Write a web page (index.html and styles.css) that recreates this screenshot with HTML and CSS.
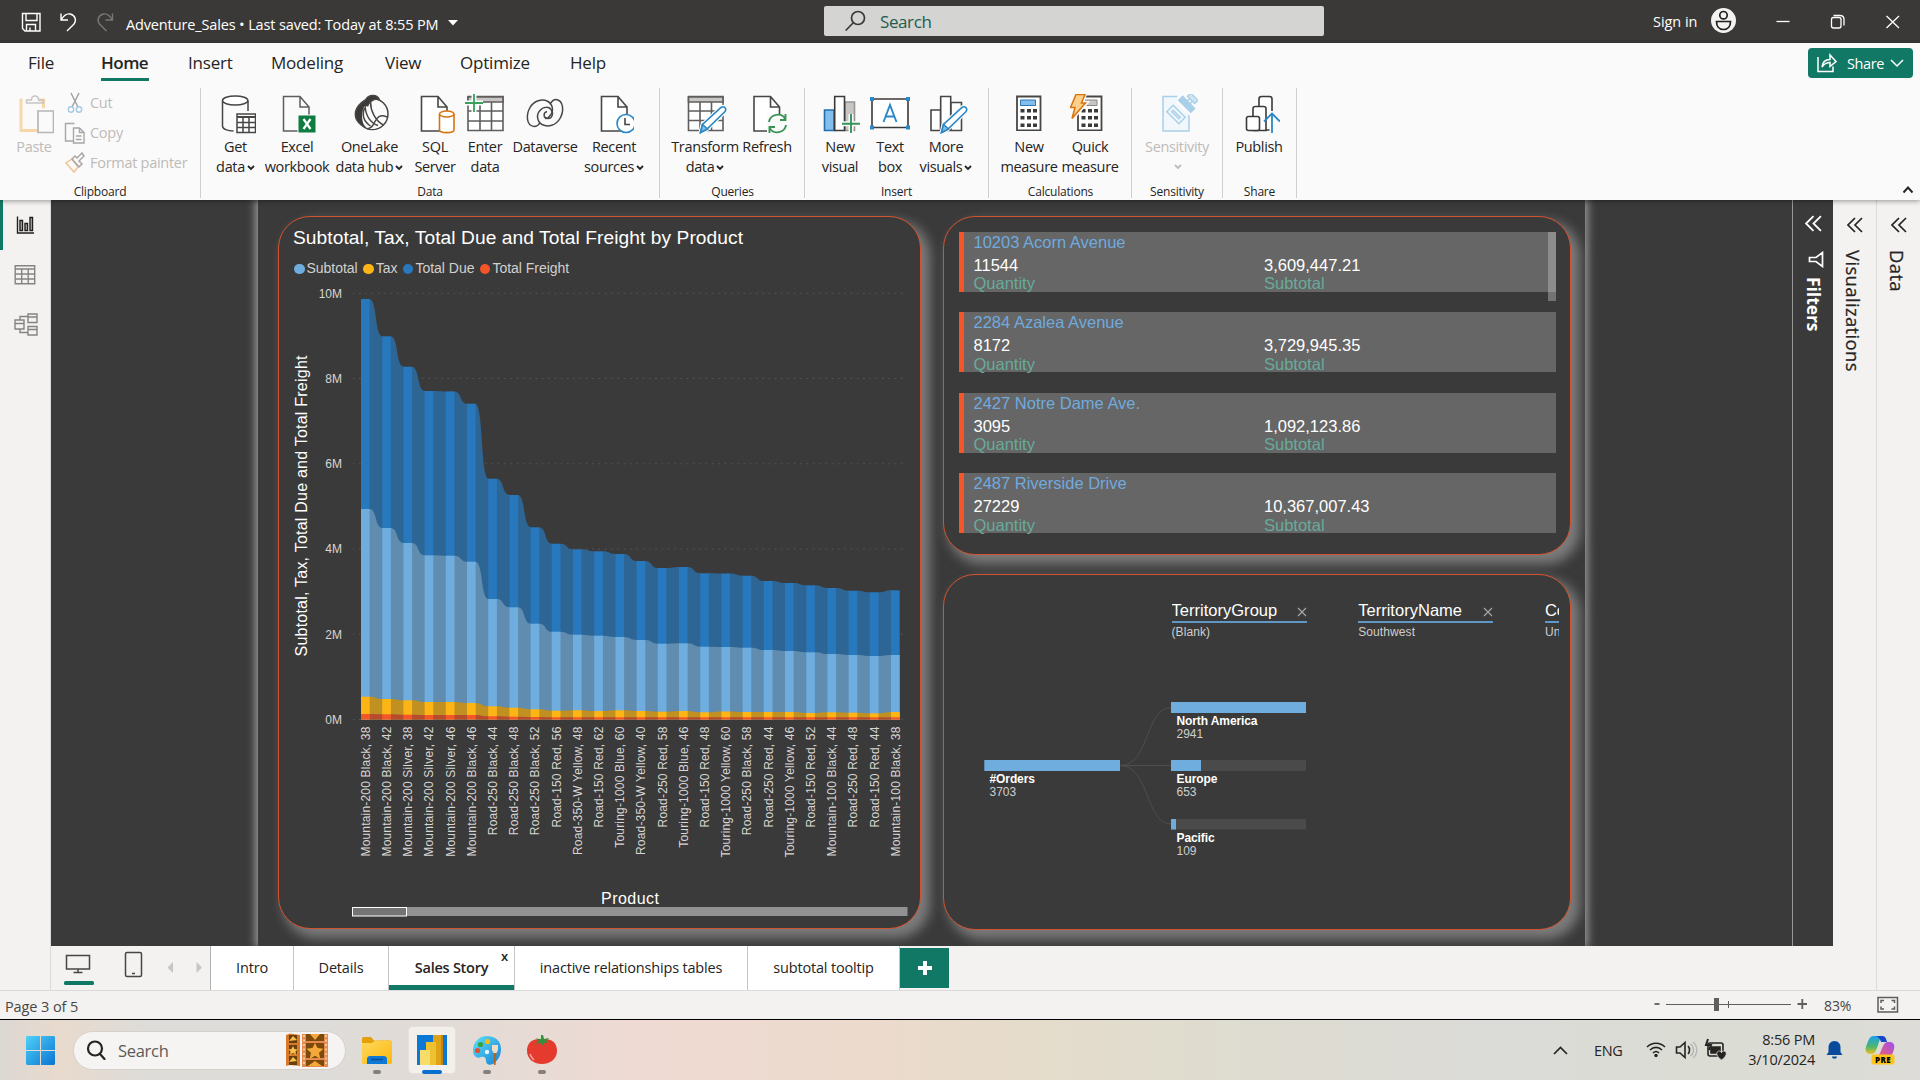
FILE: index.html
```html
<!DOCTYPE html>
<html lang="en">
<head>
<meta charset="utf-8">
<title>Adventure_Sales</title>
<link rel="stylesheet" href="styles.css">
</head>
<body>
<svg class="defs" width="0" height="0">
  <defs>
    <symbol id="chev" viewBox="0 0 8 6"><path d="M1 1l3 3 3-3" fill="none" stroke="currentColor" stroke-width="1.8"/></symbol>
    <symbol id="dbl" viewBox="0 0 16 16"><path d="M8 1L1 8l7 7M15 1L8 8l7 7" fill="none" stroke="currentColor" stroke-width="1.7"/></symbol>
    <symbol id="calc" viewBox="0 0 26 37"><path d="M1 2.5h23.5v34H1z" fill="#fff" stroke="#484644" stroke-width="1.8"/><g fill="#3b3a39"><path d="M4.5 15h4v3.5h-4zM11 15h4v3.5h-4zM17 15h4v3.5h-4zM4.5 22h4v3.5h-4zM11 22h4v3.5h-4zM17 22h4v3.5h-4zM4.5 29.500h4v3.500h-4zM11 29.500h4v3.500h-4zM17 29.500h4v3.500h-4z"/></g></symbol>
  </defs>
</svg>
<div class="app">
  <header class="titlebar">
    <svg class="quick" width="100" height="24" viewBox="20 10 100 24" fill="none" stroke="#fff" stroke-width="1.4">
      <path d="M22.500 13.500h17.500v17.500h-15l-2.500-2.500zM26 13.500v7h11v-7M26.500 31v-6.500h9V31M30 31v-3.500"/>
      <path d="M61 13.500v6.500h7M61 20c3-5 6-6.500 9-6 5 1 7 6 4 10l-7 7"/>
      <path stroke="#797775" d="M112.500 13.500v6.500h-7M112.500 20c-3-5-6-6.500-9-6-5 1-7 6-4 10l7 7"/>
    </svg>
    <span class="file-name">Adventure_Sales <b>•</b> Last saved: Today at 8:55 PM</span>
    <svg class="file-caret" width="10" height="6"><path d="M0 0h10L5 5.500z" fill="#fff"/></svg>
    <div class="search">
      <svg width="22" height="22" viewBox="0 0 22 22" fill="none" stroke="#3b3a39" stroke-width="1.700"><circle cx="13" cy="8" r="6.500"/><path d="M8.500 12.500L.7 20.500"/></svg>
      <span>Search</span>
    </div>
    <span class="signin">Sign in</span>
    <svg class="win" width="190" height="30" viewBox="1710 8 190 30" fill="none" stroke="#fff" stroke-width="1.300">
      <circle cx="1723.500" cy="21.500" r="12.500" fill="#f3f2f1" stroke="none"/>
      <g stroke="#201f1e" stroke-width="1.700"><circle cx="1723.500" cy="16.200" r="3.700"/><path d="M1716.500 22.500h14c0 4-2 8-7 8s-7-4-7-8z"/></g>
      <path d="M1776.500 22.500h13"/>
      <rect x="1831.500" y="18.500" width="9.500" height="10.500" rx="2"/><path d="M1833.500 16.500h6.500c2.500 0 4 1.500 4 4v6"/>
      <path d="M1886.500 17l12.500 12M1899 17l-12.500 12"/>
    </svg>
  </header>

  <section class="ribbon">
    <nav class="menu">
      <a class="m-file">File</a><a class="m-home on">Home</a><a class="m-insert">Insert</a><a class="m-model">Modeling</a><a class="m-view">View</a><a class="m-opt">Optimize</a><a class="m-help">Help</a>
      <div class="share">
        <svg width="20" height="20" viewBox="0 0 20 20" fill="none" stroke="#fff" stroke-width="1.500"><path d="M1 4v14.500h15V13.500"/><path d="M5 14c.5-5 3-7.500 8-7.500V2l6 6.500-6 5v-4c-4 0-6 1.500-8 4.500z"/></svg>
        <span>Share</span>
        <svg width="14" height="9" viewBox="0 0 14 9"><path d="M1 1l6 6 6-6" fill="none" stroke="#fff" stroke-width="1.500"/></svg>
      </div>
    </nav>
    <div class="groups">
      <div class="group g-clip">
        <div class="tools off">
          <div class="tool t-paste"><svg width="40" height="40" viewBox="-1.500 0 40 40" fill="none"><path d="M7 6h-1.500v30.500H22M28 14V6h-5" stroke="#f6d7ab" stroke-width="3"/><path d="M11 9V6h5c0-3 2-4 3.500-4s3.500 1 3.500 4h5v3z" stroke="#c8c6c4" stroke-width="1.500"/><path d="M22.500 17H38v21.500H22.500z" fill="#fafafa" stroke="#b8b6b4" stroke-width="1.700"/></svg><span>Paste</span></div>
          <div class="minis">
            <div><svg width="22" height="22" viewBox="0 0 22 22" fill="none" stroke-width="1.400"><path d="M7 1l7 14M15 1L8 15" stroke="#a19f9d"/><circle cx="7" cy="17.500" r="2.700" stroke="#a3cbe4"/><circle cx="15" cy="17.500" r="2.700" stroke="#a3cbe4"/></svg>Cut</div>
            <div><svg width="22" height="22" viewBox="0 0 22 22" fill="#fafafa" stroke="#a9a7a5" stroke-width="1.400"><path d="M9 19H1.500V1.500h9"/><path d="M9.500 6h6l4.500 4.500V21H9.500zM15.500 6v4.500H20M12 14h5.500M12 17.500h5.500"/></svg>Copy</div>
            <div><svg width="22" height="22" viewBox="0 0 22 22" fill="none" stroke-width="1.500"><path d="M2 11l8 9 4-5-6-8z" stroke="#f3c493"/><path d="M8 7l7 8 3-3-3-3 5-5-2-3-5 5-2-2z" stroke="#a9a7a5"/></svg>Format painter</div>
          </div>
        </div>
        <div class="glabel">Clipboard</div>
      </div>
      <div class="group g-data">
        <div class="tools">
          <div class="tool" style="width:57px"><svg width="40" height="40" viewBox="0 0 40 40" fill="none" stroke="#484644" stroke-width="1.500"><path d="M6.500 7v25c0 3 5 5 11 5M32 7v10"/><ellipse cx="19.200" cy="6.500" rx="12.700" ry="4.500" fill="#fff"/><path d="M21 20h18.500v18.500H21z" fill="#fff"/><path d="M21 23h18" stroke-width="2"/><path d="M21 28.500h18M21 33.500h18M27 22v17M33 22v17"/></svg><span>Get<br>data<svg class="dd" width="8" height="6"><use href="#chev"/></svg></span></div>
          <div class="tool" style="width:66px"><svg width="40" height="40" viewBox="0 0 40 40" stroke="#605e5c" stroke-width="1.500"><path d="M6.500 2.500H23l9 10.500v24H6.500zM23 2.500V13h9" fill="#fafafa"/><path d="M21 21h18v18H21z" fill="#107c41" stroke="#fafafa" stroke-width="1"/><path d="M26.500 25l7 10M33.500 25l-7 10" stroke="#fff" stroke-width="2.200"/></svg><span>Excel<br>workbook</span></div>
          <div class="tool" style="width:79px"><svg width="40" height="40" viewBox="-.5 0 40 40" fill="none" stroke="#484644" stroke-width="1.500"><circle cx="22" cy="20" r="15.500"/><path d="M15 6c3-6 12-6 14 0-4-2-8 0-11 4-4 6-4 15 0 23C9 33 4 25 5 18c1-5 5-9 10-12z" fill="#3b3a39"/><path d="M14 12c5 0 6 3 8 8s5 10 9 11c-6 6-15 5-18-1-2-5-2-12 1-18z" fill="#fafafa" stroke="none"/><path d="M14.500 12c1 11 6 17 13 19.500M36.500 23c-7-3-10 0-13 6-1 3-3 5-7 6M20 8c0 9 5 19 13 23M14 14c-3 8 0 14 6 18"/></svg><span>OneLake<br>data hub<svg class="dd" width="8" height="6"><use href="#chev"/></svg></span></div>
          <div class="tool" style="width:52px"><svg width="40" height="40" viewBox="0 0 40 40" stroke="#484644" stroke-width="1.600"><path d="M6.500 2.500H23l9 10.500v24H6.500zM23 2.500V13h9" fill="#fff"/><g stroke="#d8730f"><path d="M24.500 20v16c0 3.500 14.500 3.500 14.500 0V20" fill="#fff"/><ellipse cx="31.750" cy="20" rx="7.250" ry="3" fill="#fff"/></g></svg><span>SQL<br>Server</span></div>
          <div class="tool" style="width:48px"><svg width="40" height="40" viewBox="0 0 40 40" fill="none" stroke="#605e5c" stroke-width="1.600"><path d="M3 2.500h35v34H3z" fill="#fff"/><path d="M3 3h35v5H3z" fill="#c8c6c4"/><path d="M3 17h35M3 27h35M15 8v29M26.500 8v29"/><path d="M9 0v18M0 9h18" stroke="#fafafa" stroke-width="5"/><path d="M9 0v18M0 9h18" stroke="#37a15b" stroke-width="1.800"/></svg><span>Enter<br>data</span></div>
          <div class="tool" style="width:72px"><svg width="40" height="40" viewBox="0 0 40 40" fill="none" stroke="#484644" stroke-width="1.500"><path d="M31 5.500c8 1 8 12 4 19-4 7-12 9-18 6-5-3-6-10-2-14 3-4 9-4 11-1 3 4 1 9-3 9-5 0-5-6-1-7"/><path d="M9 32.500c-8-1-8-12-4-19 4-7 12-9 18-6 5 3 6 10 2 14-1 2-3 3-5 3M31 5.500c-3 0-5 3-6 5M9 32.500c3 0 5-2 6-4"/></svg><span>Dataverse</span></div>
          <div class="tool" style="width:66px"><svg width="40" height="40" viewBox="0 0 40 40" stroke="#484644" stroke-width="1.600"><path d="M7.500 2.500H24l9 10.500v24H7.500zM24 2.500V13h9" fill="#fff"/><circle cx="32" cy="29.500" r="9" fill="#fff" stroke="#2b88c6"/><path d="M31 24v6.500h5" fill="none"/></svg><span>Recent<br>sources<svg class="dd" width="8" height="6"><use href="#chev"/></svg></span></div>
        </div>
        <div class="glabel">Data</div>
      </div>
      <div class="group g-quer">
        <div class="tools">
          <div class="tool" style="width:66px"><svg width="44" height="40" viewBox="-2 0 44 40" fill="none" stroke="#605e5c" stroke-width="1.600"><path d="M3.500 2.500H38v34H3.500z" fill="#fff"/><path d="M3.500 3H38v5H3.500z" fill="#c8c6c4"/><path d="M3.500 17H38M3.500 26.500H38M15 8v29M26.500 8v29"/><path d="M15.500 38.500l2-8L36 13.500c3-2 6 1 4 4L22 35z" fill="#fff" stroke="#fafafa" stroke-width="4"/><path d="M15.500 38.500l2-8L36 13.500c3-2 6 1 4 4L22 35z" fill="#fff" stroke="#2b88c6"/><path d="M15.500 38.500l2-8 5 4.500z" fill="#83beec" stroke="#2b88c6"/></svg><span>Transform<br>data<svg class="dd" width="8" height="6"><use href="#chev"/></svg></span></div>
          <div class="tool" style="width:58px"><svg width="40" height="40" viewBox="0 0 40 40" stroke="#484644" stroke-width="1.600" fill="none"><path d="M7 2.500h16.500l9 10.500v24H7zM23.500 2.500V13h9" fill="#fff"/><path d="M20 20h20v19H20z" fill="#fafafa" stroke="none"/><g stroke="#3a9455" stroke-width="1.900"><path d="M22 28c1-8 13-10 16-3M38.500 20v6H33M39 31c-1 8-13 10-16 3M22.500 39v-6H28"/></g></svg><span>Refresh</span></div>
        </div>
        <div class="glabel">Queries</div>
      </div>
      <div class="group g-ins">
        <div class="tools">
          <div class="tool" style="width:48px"><svg width="40" height="40" viewBox="0 0 40 40" fill="none" stroke-width="1.600"><path d="M25 8h9.500v28.500H25z" fill="#c8c6c4" stroke="#979593"/><path d="M4.500 16H14v20.500H4.500z" fill="#83beec" stroke="#1f6fb0"/><path d="M14.700 2.500H24.500v34h-9.800z" fill="#fff" stroke="#3b3a39"/><path d="M31 20v19M22 29.700h18" stroke="#fafafa" stroke-width="5"/><path d="M31 20v19M22 29.700h18" stroke="#37935a" stroke-width="1.900"/></svg><span>New<br>visual</span></div>
          <div class="tool" style="width:52px"><svg width="40" height="40" viewBox="0 0 40 40"><path d="M2 5h36v28.500H2z" fill="#fff" stroke="#3b3a39" stroke-width="1.600"/><path d="M0 3h4v4H0zM36 3h4v4h-4zM0 31.500h4v4H0zM36 31.500h4v4h-4z" fill="#2b88c6"/><path d="M13.500 28L20 11l6.500 17M15.500 22.500h9" fill="none" stroke="#2b88c6" stroke-width="1.900"/></svg><span>Text<br>box</span></div>
          <div class="tool" style="width:60px"><svg width="44" height="40" viewBox="-2 0 44 40" fill="#fff" stroke="#484644" stroke-width="1.600"><path d="M25 8.500h10.500v28H25zM5 16h9.500v20.500H5zM14.700 2.500h10v34h-10z"/><path d="M15.500 38.500l2-8L36 13.500c3-2 6 1 4 4L22 35z" stroke="#fafafa" stroke-width="4"/><path d="M15.500 38.500l2-8L36 13.500c3-2 6 1 4 4L22 35z" stroke="#2b88c6"/><path d="M15.500 38.500l2-8 5 4.500z" fill="#83beec" stroke="#2b88c6"/></svg><span>More<br>visuals<svg class="dd" width="8" height="6"><use href="#chev"/></svg></span></div>
        </div>
        <div class="glabel">Insert</div>
      </div>
      <div class="group g-calc">
        <div class="tools">
          <div class="tool" style="width:58px"><svg width="40" height="40" viewBox="0 0 40 40"><use href="#calc" x="7" y="0" width="26" height="37"/><path d="M11.500 6h15v5.500h-15z" fill="#83beec" stroke="#2b78b8"/></svg><span>New<br>measure</span></div>
          <div class="tool" style="width:64px"><svg width="40" height="40" viewBox="0 0 40 40"><use href="#calc" x="7" y="0" width="26" height="37"/><path d="M12 6h15v5.500H12z" fill="#c8c6c4" stroke="#8a8886"/><path d="M6 0h9l-3 9h4L2 25l3-11H.500z" fill="#fbd08a" stroke="#fafafa" stroke-width="4"/><path d="M6 .500h9l-3.500 8.500h4L2 24.500l3-11H.500z" fill="#fbd08a" stroke="#d8730f" stroke-width="1.500"/></svg><span>Quick<br>measure</span></div>
        </div>
        <div class="glabel">Calculations</div>
      </div>
      <div class="group g-sens">
        <div class="tools off">
          <div class="tool" style="width:70px"><svg width="42" height="40" viewBox="0 0 42 40" fill="#f1f7fb" stroke="#a9d0e8" stroke-width="1.500"><path d="M7 2.500h26v34.500H7z"/><path d="M22-1h20v20l-8 3L20 9z" fill="#fafafa" stroke="none"/><g transform="translate(20 20.500) rotate(45)"><path d="M-8.500-4.500h17v9h-17zM-5-1H5v2H-5z"/></g><g transform="translate(30.500 10.500) rotate(45)"><path d="M-8.500-3h17v5.500h-17z" fill="#a9d0e8"/><path d="M-2-6.500h4V-3h-4z"/><path d="M-5-11H5v4.500H-5z" fill="#d3e6f2"/></g></svg><span>Sensitivity<br><svg class="dd" width="8" height="6"><use href="#chev"/></svg></span></div>
        </div>
        <div class="glabel">Sensitivity</div>
      </div>
      <div class="group g-share">
        <div class="tools">
          <div class="tool" style="width:56px"><svg width="42" height="40" viewBox="-1 0 42 40" fill="#fff" stroke="#3b3a39" stroke-width="1.600"><path d="M20 12V5c0-1.500 1-2.500 2.500-2.500h8C32 2.500 33 3.500 33 5v31H20"/><path d="M14 22v-7.500c0-1.500 1-2 2.500-2h8c1.500 0 2.500.5 2.500 2V36.500H14"/><rect x="7.500" y="22.500" width="13" height="14" rx="2"/><path d="M33 17v22" stroke="#fafafa" stroke-width="5"/><path d="M33 39V20M25 27.500l8-8 8 8" fill="none" stroke="#2b88c6" stroke-width="1.800"/></svg><span>Publish</span></div>
        </div>
        <div class="glabel">Share</div>
      </div>
      <svg class="collapse" width="12" height="9" viewBox="0 0 12 9"><path d="M1.500 7.500L6 2.500l4.500 5" fill="none" stroke="#252423" stroke-width="1.900"/></svg>
    </div>
  </section>

  <div class="middle">
    <aside class="rail">
      <div class="rail-item on"><svg width="20" height="20" viewBox="0 0 20 20" fill="none" stroke="#201f1e" stroke-width="1.400"><path d="M1.500 1.500v16.500H18"/><path d="M4 5.500h2.500v10H4zM9 8.500h2.500v7H9zM14 2.500h2.500v13H14z" fill="#bbb"/></svg></div>
      <div class="rail-item"><svg width="22" height="20" viewBox="-1 1 22 20" fill="none" stroke="#868482" stroke-width="1.400"><path d="M.2 1.700h19.500v18H.2zM.2 5h19.500M.2 10h19.500M.2 15h19.500M6.700 5v14.700M13.200 5v14.700"/></svg></div>
      <div class="rail-item"><svg width="24" height="24" viewBox="0 0 24 24" fill="none" stroke="#868482" stroke-width="1.400"><path d="M14 1h9v8.500h-9zM14 4h9M1 7h9v9H1zM1 10.500h9M14 13.500h9V22h-9zM14 16.500h9M6 7V3.500h8M6 16v3.500h8"/></svg></div>
    </aside>
    <main class="canvas">
      <div class="report">
        <section class="card chart-card">
          <h2>Subtotal, Tax, Total Due and Total Freight by Product</h2>
          <div class="legend"><i class="c-sub"></i><span>Subtotal</span><i class="c-tax"></i><span>Tax</span><i class="c-due"></i><span>Total Due</span><i class="c-fre"></i><span>Total Freight</span></div>
          <svg id="chart" width="641" height="648" viewBox="279 280 641 648"></svg>
        </section>
        <div class="right-col">
          <section class="card rows-card">
            <div class="rows">
              <div class="row"><h3>10203 Acorn Avenue</h3><p><b>11544</b><b>3,609,447.21</b></p><p class="k"><span>Quantity</span><span>Subtotal</span></p></div>
              <div class="row"><h3>2284 Azalea Avenue</h3><p><b>8172</b><b>3,729,945.35</b></p><p class="k"><span>Quantity</span><span>Subtotal</span></p></div>
              <div class="row"><h3>2427 Notre Dame Ave.</h3><p><b>3095</b><b>1,092,123.86</b></p><p class="k"><span>Quantity</span><span>Subtotal</span></p></div>
              <div class="row"><h3>2487 Riverside Drive</h3><p><b>27229</b><b>10,367,007.43</b></p><p class="k"><span>Quantity</span><span>Subtotal</span></p></div>
              <div class="scroll"></div>
            </div>
          </section>
          <section class="card tree-card">
            <div class="levels">
              <div class="level"><h4>TerritoryGroup<svg width="10" height="10" viewBox="0 0 10 10"><path d="M1 1l8 8M9 1L1 9" stroke="#a8a6a4" stroke-width="1.200"/></svg></h4><p>(Blank)</p></div>
              <div class="level"><h4>TerritoryName<svg width="10" height="10" viewBox="0 0 10 10"><path d="M1 1l8 8M9 1L1 9" stroke="#a8a6a4" stroke-width="1.200"/></svg></h4><p>Southwest</p></div>
              <div class="level"><h4>Country</h4><p>United States</p></div>
            </div>
            <svg class="tree" width="340" height="180" viewBox="980 690 340 180">
              <g fill="none" stroke="#4e4e4e"><path d="M1120 765.500C1150 765.500 1145 707.500 1171 707.500M1120 765.500H1171M1120 765.500C1150 765.500 1145 824 1171 824"/></g>
              <g fill="#4a4a4a"><path d="M1171 760h135v11h-135zM1171 819h135v10.500h-135z"/></g>
              <g fill="#70addf"><path d="M984.300 760H1120v11H984.300zM1171 702h135v11h-135zM1171 760h30v11h-30zM1171 819h5v10.500h-5z"/></g>
              <g class="n"><text x="989.500" y="783">#Orders</text><text x="1176.500" y="725">North America</text><text x="1176.500" y="783">Europe</text><text x="1176.500" y="842">Pacific</text></g>
              <g class="v"><text x="989.500" y="796">3703</text><text x="1176.500" y="738">2941</text><text x="1176.500" y="796">653</text><text x="1176.500" y="855">109</text></g>
            </svg>
          </section>
        </div>
      </div>
    </main>
    <aside class="filters"><svg width="17" height="17"><use href="#dbl"/></svg><svg class="funnel" width="16" height="17" viewBox="0 0 16 17"><path d="M14.500 1.500v14L8 10.500H1.500v-4H8z" fill="none" stroke="#fff" stroke-width="1.700"/></svg><span>Filters</span></aside>
    <aside class="pane"><svg width="16" height="16"><use href="#dbl"/></svg><span>Visualizations</span></aside>
    <aside class="pane"><svg width="16" height="16"><use href="#dbl"/></svg><span>Data</span></aside>
    <footer class="tabs">
      <div class="views">
        <svg width="159" height="43" viewBox="51 946 159 43" fill="none" stroke="#484644" stroke-width="1.500"><path d="M66.500 955.500h23v13.500h-23zM78 969v3.500M73.500 972.500h9"/><rect x="64" y="981" width="30" height="4" rx="1.500" fill="#117865" stroke="none"/><rect x="125.500" y="952.500" width="16" height="24" rx="1.500"/><path d="M132 973.500h3"/><path d="M173 962v11l-5.500-5.500zM196.500 962v11l5.500-5.500z" fill="#c8c6c4" stroke="none"/></svg>
      </div>
      <div class="tab" style="width:83px">Intro</div><div class="tab" style="width:95px">Details</div><div class="tab on" style="width:126px">Sales Story<i>x</i></div><div class="tab" style="width:233px">inactive relationships tables</div><div class="tab" style="width:152px">subtotal tooltip</div>
      <div class="add"><svg width="14" height="14"><path d="M7 0v14M0 7h14" stroke="#fff" stroke-width="4"/></svg></div>
    </footer>
  </div>

  <div class="status">
    <span>Page 3 of 5</span>
    <svg width="155" height="20" viewBox="1655 996 155 20" fill="none" stroke="#605e5c"><path d="M1655.500 1005h5" stroke-width="1.800"/><path d="M1667 1005.500h125M1729.500 1002v7"/><path d="M1715 999h5v13h-5z" fill="#605e5c" stroke="none"/><path d="M1798.500 1005h9.500M1803.300 1000v10" stroke-width="1.800"/></svg>
    <span class="pct">83%</span>
    <svg class="fit" width="22" height="18" viewBox="0 0 22 18" fill="none" stroke="#605e5c" stroke-width="1.500"><path d="M1 1.500h19.500v14.500H1z"/><path d="M4 7V4.500h3M14.500 4.500h3V7M17.500 10.500V13h-3M7 13H4v-2.500"/></svg>
  </div>

  <div class="taskbar">
    <svg class="start" width="29" height="29" viewBox="0 0 29 29"><defs><linearGradient id="w" x1="0" y1="0" x2="1" y2="1" gradientUnits="objectBoundingBox"><stop offset="0" stop-color="#4fd1f8"/><stop offset="1" stop-color="#0a74d2"/></linearGradient></defs><path d="M1 0h13v14H0V1zM15 0h13l1 1v13H15zM0 15h14v14H1l-1-1zM15 15h14v13l-1 1H15z" fill="url(#w)"/></svg>
    <div class="pill">
      <svg width="20" height="20" viewBox="0 0 20 20" fill="none" stroke="#252423" stroke-width="2.200"><circle cx="9" cy="8.500" r="7"/><path d="M14 14l4.500 5" stroke-linecap="round"/></svg>
      <span>Search</span>
      <svg width="44" height="34" viewBox="285 1033 44 34"><path d="M286 1035l4-1.500 10 1.500v31l-10-1-4 1z" fill="#d87a2c"/><path d="M289 1035h8v8h-8zM289 1045h8v9h-8zM289 1056h8v9h-8z" fill="#6b3f0c"/><path d="M302 1034h26v33h-26z" fill="#e68a4e"/><path d="M306 1034h18v7h-18zM306 1043h18v15h-18zM306 1060h18v6h-18z" fill="#7d4a0d"/><path d="M315 1043l2.500 5 6 .8-4.500 4 1.200 6-5.200-3-5.200 3 1.200-6-4.500-4 6-.8zM315 1040l-5-6h10zM308 1066l7-5 7 5z" fill="#f5a93b"/><path d="M293 1046l1.500 3 3 .5-2 2 .5 3-3-1.500-3 1.500.5-3-2-2 3-.5zM289 1041l4-5 4 4zM289 1062l4-5 4 4z" fill="#f9c04a"/><path d="M304 1035v31M326 1035v31" stroke="#fbe0b8" stroke-width="1.500" stroke-dasharray="2 2.500"/></svg>
    </div>
    <svg class="apps" width="210" height="52" viewBox="354 1024 210 52">
      <defs><linearGradient id="f" x1="0" y1="0" x2="1" y2="1"><stop offset="0" stop-color="#ffd95e"/><stop offset="1" stop-color="#fbb70c"/></linearGradient><linearGradient id="pa" x1="0" y1="0" x2="1" y2="1"><stop offset="0" stop-color="#5fe0f7"/><stop offset="1" stop-color="#1582d8"/></linearGradient></defs>
      <path d="M362 1039c0-1.500 1-2 2-2h7l3 3.500h14c2 0 4 0 4 2v6h-30z" fill="#e3a008"/><path d="M362 1043h10l3-2.500h15c1.500 0 2 1 2 2V1062c0 1.500-.5 2-2 2h-26c-1.500 0-2-.5-2-2z" fill="url(#f)"/><path d="M367 1064v-5c0-2 1.500-3 3-3h14c1.500 0 3 1 3 3v5z" fill="#0f78d4"/><path d="M371 1059.500h12" stroke="#0b4f94" stroke-width="1.500"/>
      <rect x="408.500" y="1026.500" width="47" height="47" rx="4" fill="#f3efeb" stroke="#e6e0dc"/>
      <path d="M417 1035h30v30h-30z" fill="#0a78d4"/><path d="M433 1035h10v30h-10z" fill="#e0a318"/><path d="M426 1042h10v23h-10z" fill="#eec22e"/><path d="M420 1050h10v15h-10z" fill="#f7dc6a"/><path d="M441 1035h2v30h-2z" fill="#c98410"/>
      <rect x="422" y="1070" width="20" height="4" rx="2" fill="#0a70cf"/>
      <path d="M487 1036c8 0 14 5 14 13s-4 12-8 15c-4 2-7 0-7-3 0-4-2-5-5-4-4 2-8-1-8-6 0-9 6-15 14-15z" fill="url(#pa)"/><circle cx="487.500" cy="1041.500" r="2.600" fill="#f6bd17"/><circle cx="480.500" cy="1044.500" r="2.600" fill="#37a33c"/><circle cx="477.500" cy="1050.500" r="2.600" fill="#e2502c"/><circle cx="487" cy="1052" r="2.200" fill="#e8f5fb"/><path d="M493.500 1052h3l-1 13h-1.500z" fill="#b5651d"/><path d="M492 1045h6v5l-1.500 3h-3l-1.500-3z" fill="#f0dcc4"/>
      <path d="M542 1040c9-3 15 3 15 10.500 0 8-6 13.500-15 13.500s-15-5.500-15-13.500c0-7.500 6-13.500 15-10.500z" fill="#e53a2e"/><path d="M541 1035h2l1 4 5-1-3 3 3 1.500-5 .5-2 3-1.500-3-5.500.5 4-2.500-3.500-2.500 5.500.5z" fill="#35903c"/><path d="M530 1054c1 3 2 4 4 6" stroke="#f7a8a0" stroke-width="1.500" fill="none"/>
      <g fill="#827f7c"><rect x="373" y="1070" width="8" height="4" rx="2"/><rect x="483" y="1070" width="8" height="4" rx="2"/><rect x="538" y="1070" width="8" height="4" rx="2"/></g>
    </svg>
    <div class="tray">
      <svg width="15" height="9" viewBox="0 0 15 9"><path d="M1 8l6.500-6.500L14 8" fill="none" stroke="#252423" stroke-width="1.700"/></svg>
      <span class="eng">ENG</span>
      <svg class="net" width="84" height="24" viewBox="1644 1038 84 24" fill="none" stroke="#252423" stroke-width="1.600"><path d="M1647 1047c5-5 13-5 18 0M1650 1050c3.500-3.500 8.500-3.500 12 0M1653 1053c2-2 4-2 6 0"/><circle cx="1656" cy="1055.500" r="1.700" fill="#252423" stroke="none"/><path d="M1676.500 1047h3.500l5-4.500v15l-5-4.500h-3.500zM1688 1046c2 2 2 6 0 8"/><path d="M1690.500 1044c4 3 4 9 0 12M1693 1042c5 4 5 12 0 16" stroke="#b5b3b1" stroke-width="1.200"/><rect x="1708" y="1043" width="15" height="13" rx="2"/><path d="M1711 1047h9v6h-9z" fill="#252423"/><path d="M1708 1039l-2 6h5l-2 5" stroke-width="2"/><path d="M1721.500 1060c-7-5-5-9-2-9 1 0 2 1 2 2 0-1 1-2 2-2 3 0 5 4-2 9z" fill="#252423" stroke="#dcdbd7" stroke-width=".8"/></svg>
      <div class="clock">8:56 PM<br>3/10/2024</div>
      <svg width="17" height="20" viewBox="0 0 17 20"><path d="M8.500 1c4 0 6 3 6 6.500V12l2 3H.5l2-3V7.500C2.500 4 4.500 1 8.500 1zM6 16.500h5c0 3-5 3-5 0z" fill="#0a4a9c"/></svg>
      <svg class="copilot" width="31" height="30" viewBox="0 0 31 30"><defs><linearGradient id="ca" x1="0" y1="0" x2="0" y2="1"><stop offset="0" stop-color="#19a0f0"/><stop offset=".6" stop-color="#4fb76a"/><stop offset="1" stop-color="#f2c21c"/></linearGradient><linearGradient id="cb" x1="1" y1="0" x2="0" y2="1"><stop offset="0" stop-color="#a14cf0"/><stop offset="1" stop-color="#f0626a"/></linearGradient></defs><path d="M8 1h9c-3 3-4 12-7 16-1 2-3 2-5 2-4 0-5-4-4-7 2-6 3-10 7-11z" fill="url(#ca)"/><path d="M11 1h6c3 0 4 2 5 6h-6c-1-3-2-5-5-6z" fill="#1746c8"/><path d="M22 7h3c4 0 5 4 4 7-1 5-3 8-7 8H12c4-2 5-14 10-15z" fill="url(#cb)"/><rect x="6.500" y="19.500" width="23" height="10" rx="2.500" fill="#fcc418"/><text x="18" y="27.700" text-anchor="middle" class="pre">PRE</text></svg>
    </div>
  </div>
</div>
<script src="chart.js"></script>
</body>
</html>
```
FILE: styles.css
```css
* { box-sizing: border-box; }
body { margin: 0; width: 1920px; height: 1080px; overflow: hidden; font-family: "Open Sans", "Noto Sans", sans-serif; color: #252423; }
h2, h3, h4, p { margin: 0; font-weight: 400; }
svg { display: block; flex: none; }
.defs { position: absolute; }
.app { display: flex; flex-direction: column; height: 1080px; }

.titlebar { height: 43px; background: #3b3937; color: #fff; display: flex; align-items: center; padding-left: 20px; font-size: 14.5px; letter-spacing: -.25px; }
.quick { width: 100px; }
.file-name { margin-left: 6px; width: 322px; padding-top: 5px; white-space: nowrap; letter-spacing: -.14px; }
.file-name b { font-size: 15px; line-height: 10px; font-weight: 400; }
.file-caret { margin: 3px 0 0; }
.search { margin-left: 366px; margin-top: -1px; width: 500px; height: 30px; background: #d4d4d2; border-radius: 2px; display: flex; align-items: center; padding-left: 21px; gap: 13px; font-size: 17px; color: #1f5c50; letter-spacing: -.4px; }
.signin { margin-left: 329px; width: 57px; letter-spacing: -.05px; }
.win { display: block; }

.ribbon { height: 157px; background: #fafafa; position: relative; z-index: 3; box-shadow: 0 1px 5px rgba(0,0,0,.4); display: flex; flex-direction: column; }
.menu { height: 45px; display: flex; align-items: flex-start; padding: 5px 7px 0 28px; font-size: 17px; letter-spacing: -.2px; }
.menu a { height: 33px; line-height: 29px; }
.m-file { width: 73px; }
.m-home { width: 48px; margin-right: 39px; }
.m-insert { width: 83px; }
.m-model { width: 114px; }
.m-view { width: 75px; }
.m-opt { width: 110px; }
.menu .on { font-weight: 600; letter-spacing: -.5px; border-bottom: 3px solid #117865; }
.share { margin-left: auto; width: 105px; height: 30px; background: #117865; border-radius: 4px; color: #fff; display: flex; align-items: center; padding-left: 9px; font-size: 14.500px; letter-spacing: -.4px; }
.share span { margin: 0 6px 0 10px; }
.groups { display: flex; height: 110px; position: relative; }
.group { border-right: 1px solid #d2d0ce; display: flex; flex-direction: column; padding-top: 6px; }
.tools { display: flex; height: 92px; font-size: 14.500px; line-height: 20px; letter-spacing: -.35px; }
.tool { display: flex; flex-direction: column; align-items: center; text-align: center; white-space: nowrap; }
.tool > span { margin-top: 3px; }
.dd { display: inline-block; margin-left: 2px; vertical-align: 1px; }
.off { color: #bebbb8; }
.off .dd { vertical-align: 2px; }
.glabel { font-size: 12px; line-height: 12px; text-align: center; letter-spacing: -.2px; margin-top: 0; }
.g-clip { width: 201px; }
.t-paste { width: 60px; padding-left: 8px; }
.minis { display: flex; flex-direction: column; margin-left: 4px; letter-spacing: -.28px; }
.minis div { display: flex; align-items: center; height: 30px; gap: 4px; margin-top: -6px; margin-bottom: 6px; }
.g-data { width: 459px; padding-left: 6px; }
.g-quer { width: 145px; padding-left: 12px; }
.g-ins { width: 184px; padding-left: 11px; }
.g-calc { width: 143px; padding-left: 11px; }
.g-sens { width: 91px; padding-left: 10px; }
.g-share { width: 74px; padding-left: 8px; }
.g-data .glabel { margin-right: 6px; }
.g-quer .glabel, .g-ins .glabel { margin-right: 11px; }
.g-calc .glabel, .g-sens .glabel { margin-right: 10px; }
.g-share .glabel { margin-right: 8px; }
.collapse { position: absolute; left: 1902px; top: 97px; }

.middle { height: 791px; display: grid; grid-template-columns: 51px 1741px 41px 44px 43px; grid-template-rows: 746px 45px; }
.rail { grid-row: 1 / 3; background: #f3f2f1; border-right: 1px solid #dddbd9; border-bottom: 1px solid #dddbd9; }
.rail-item { height: 50px; display: flex; align-items: center; padding-left: 14px; }
.rail-item.on { border-left: 3px solid #117865; padding-left: 13px; }
.canvas { background: #3a3a3a; overflow: hidden; padding-left: 207px; }
.report { width: 1327px; height: 746px; background: #3a3a3a; box-shadow: 0 0 9px 2px #a8a8a8; display: flex; gap: 22px; padding: 16px 0 0 20px; clip-path: inset(0 -20px); }
.card { border: 1px solid #d4532e; border-radius: 32px; background: #3a3a3a; box-shadow: 7px 7px 12px 2px #7c7c7c; }
.chart-card { width: 643px; height: 713px; padding-top: 10px; font-family: "Liberation Sans", Arial, sans-serif; color: #fff; }
.chart-card h2 { font-size: 19.200px; line-height: 22px; padding-left: 14px; letter-spacing: .06px; white-space: nowrap; }
.legend { display: flex; align-items: center; height: 20px; margin-top: 9px; padding-left: 15px; font-size: 14px; letter-spacing: -.02px; color: #d2d0ce; }
.legend i { width: 10.500px; height: 10.500px; border-radius: 50%; margin-right: 2px; margin-top: 2px; }
.legend span { margin-right: 5.500px; white-space: nowrap; }
.c-sub { background: #70addf; } .c-tax { background: #fdb515; } .c-due { background: #2878be; } .c-fre { background: #f4562a; }
#chart { margin-top: 2px; }
#chart text { font-family: "Liberation Sans", Arial, sans-serif; }
.ytick, .xtick { font-size: 12px; fill: #d8d6d4; }
.axis { font-size: 16px; fill: #fff; }

.right-col { display: flex; flex-direction: column; gap: 19px; width: 628px; font-family: "Liberation Sans", Arial, sans-serif; }
.rows-card { height: 339px; padding: 15px 0 0 14.500px; }
.rows { width: 597.500px; display: flex; flex-direction: column; gap: 20.700px; position: relative; }
.row { height: 59.800px; background: #666; border-left: 5px solid #f4562a; padding: 0 0 0 10px; font-size: 16.500px; color: #fff; }
.row h3 { font-size: 16.500px; line-height: 20px; height: 24px; color: #70aade; }
.row p { display: flex; line-height: 18.300px; }
.row b, .row span { font-weight: 400; width: 290.500px; }
.row .k { color: #68ab9b; }
.scroll { position: absolute; right: 0; top: 0; width: 8px; height: 69px; background: rgba(200,196,190,.42); }
.tree-card { height: 356px; padding-top: 24px; }
.levels { display: flex; gap: 51.500px; margin-left: 227.500px; width: 387px; overflow: hidden; color: #fff; }
.level { width: 135.200px; flex: none; }
.level h4 { font-size: 16.500px; line-height: 20px; height: 24px; display: flex; justify-content: space-between; align-items: center; border-bottom: 2.500px solid #5f97c6; letter-spacing: .02px; }
.level h4 svg { margin-top: 3px; }
.level p { font-size: 12px; line-height: 16px; padding-top: 1px; color: #d0cecc; white-space: nowrap; letter-spacing: .1px; }
.tree { margin: 50px 0 0 36px; }
.tree text { font-family: "Liberation Sans", Arial, sans-serif; font-size: 12px; }
.n text { fill: #fff; font-weight: 700; letter-spacing: -.1px; }
.v text { fill: #d0cecc; }

.filters { background: #3a3a3a; border-left: 1px solid #979797; color: #fff; display: flex; flex-direction: column; align-items: center; padding-top: 15px; }
.filters .funnel { margin: 19px 0 0 5px; }
.filters span { writing-mode: vertical-rl; font-weight: 700; font-size: 17.500px; margin: 9px 0 0 1px; letter-spacing: -.05px; }
.pane { grid-row: 1 / 3; background: #f3f2f1; border-right: 1px solid #dddbd9; border-bottom: 1px solid #dddbd9; display: flex; flex-direction: column; align-items: center; padding-top: 17px; }
.pane:nth-of-type(4) { border-right: 0; }
.pane span { writing-mode: vertical-rl; font-size: 18.500px; font-weight: 500; margin: 17px 2px 0 0; letter-spacing: .35px; -webkit-text-stroke: .25px #252423; }
.tabs { grid-column: 2 / 4; grid-row: 2; background: #f3f2f1; border-bottom: 1px solid #dddbd9; display: flex; font-size: 14.500px; letter-spacing: -.18px; }
.views { width: 160px; border-right: 1px solid #b3b0ad; }
.tab { background: #fff; border-right: 1px solid #c8c6c4; display: flex; align-items: center; justify-content: center; position: relative; padding-bottom: 2px; }
.tab.on { font-weight: 600; letter-spacing: -.25px; box-shadow: inset 0 -5px #117865; }
.tab i { position: absolute; right: 6px; top: 1px; font-style: normal; font-size: 13px; line-height: 18px; }
.add { width: 49px; height: 40px; margin-top: 2px; background: #117865; display: flex; align-items: center; justify-content: center; }

.status { height: 29px; background: #f3f2f1; border-bottom: 1px solid #000; display: flex; align-items: center; padding: 0 21px 0 5px; font-size: 14.500px; letter-spacing: -.1px; color: #484644; }
.status > span:first-child { padding-top: 2px; }
.status svg:first-of-type { margin-left: auto; }
.pct { margin: 0 23px 0 15px; width: 30px; font-size: 14px; }

.taskbar { height: 60px; display: flex; align-items: center; padding-left: 26px; background: linear-gradient(90deg, #dcd8d3, #e8dacd 60px, #dddcd9 150px, #dddcd9 300px, #e2dbd6 450px, #efdad3 640px, #ecdacd 860px, #e5dccb 1030px, #dfdccf 1200px, #dbdbd8 1500px, #dbdcd4 1700px, #dddcd8); }
.pill { margin-left: 18px; width: 273px; height: 39px; border-radius: 20px; background: #f6f4f2; border: 1px solid #d6d0cb; display: flex; align-items: center; padding-left: 12px; font-size: 16.500px; color: #5c5a58; letter-spacing: -.3px; }
.pill span { margin-left: 12px; width: 167px; }
.apps { margin-left: 8px; }
.tray { margin-left: auto; display: flex; align-items: center; padding-right: 24px; font-size: 14.500px; letter-spacing: -.3px; }
.eng { margin: 0 20px 0 26px; width: 30px; }
.clock { width: 87px; text-align: right; line-height: 20px; margin-right: 11px; letter-spacing: -.2px; }
.copilot { margin-left: 22px; }
.pre { font-size: 8px; font-weight: 800; font-family: "Open Sans", sans-serif; letter-spacing: .3px; }
```
FILE: chart.js
```js
const svg = document.getElementById('chart');
const BASE = 719.5, M = 42.62, X0 = 361, PITCH = 21.2, W = 8.7;

// [label, total due top, subtotal top, tax top, freight top]
const bars = [
  ['Mountain-200 Black, 38', 299, 509, 696.7, 714],
  ['Mountain-200 Black, 42', 336.3, 528, 699, 714.3],
  ['Mountain-200 Silver, 38', 366.7, 543, 700.3, 714.7],
  ['Mountain-200 Silver, 42', 391, 555.3, 702, 715],
  ['Mountain-200 Silver, 46', 391.4, 555.7, 702, 715],
  ['Mountain-200 Black, 46', 403.7, 561.7, 703, 715],
  ['Road-250 Black, 44', 478.7, 599, 706.3, 716.3],
  ['Road-250 Black, 48', 495, 607.3, 707.7, 716.7],
  ['Road-250 Black, 52', 527.3, 623.7, 709.3, 717],
  ['Road-150 Red, 56', 543.7, 631.7, 710.7, 717.3],
  ['Road-350-W Yellow, 48', 549.3, 634.7, 710.2, 717.3],
  ['Road-150 Red, 62', 551.3, 635.7, 711, 717.3],
  ['Touring-1000 Blue, 60', 554, 637, 710.3, 717.3],
  ['Road-350-W Yellow, 40', 561, 640, 711, 717.3],
  ['Road-250 Red, 58', 568, 643.7, 711.7, 717.3],
  ['Touring-1000 Blue, 46', 567, 643.3, 711, 717.3],
  ['Road-150 Red, 48', 573.3, 646.7, 712.3, 717.3],
  ['Touring-1000 Yellow, 60', 573.5, 647, 711.5, 717.3],
  ['Road-250 Black, 58', 575.7, 647.7, 712, 717.3],
  ['Road-250 Red, 44', 581, 650, 712, 717.3],
  ['Touring-1000 Yellow, 46', 583, 651, 712, 717.3],
  ['Road-150 Red, 52', 585.3, 652.3, 713, 717.3],
  ['Mountain-100 Black, 44', 588, 654, 712.3, 717.3],
  ['Road-250 Red, 48', 590.7, 655, 712.7, 717.3],
  ['Road-150 Red, 44', 592.3, 656, 713.3, 717.3],
  ['Mountain-100 Black, 38', 590.3, 655, 712, 717.3]
];
const fills = ['#2878be', '#70addf', '#fdb515', '#f4562a'];
const ribbons = ['#2d6594', '#5f8caf', '#c09020', '#b84b2c'];

let out = '';
for (let v = 0; v <= 10; v += 2) {
  const y = BASE - v * M;
  out += `<path d="M353 ${y}H907" stroke="#5c5c5c" stroke-width="1" stroke-dasharray="1.3 5"/>`;
  out += `<text class="ytick" x="342" y="${y + 4.3}" text-anchor="end">${v}M</text>`;
}
for (let s = 0; s < 4; s++) {
  bars.forEach((b, i) => {
    if (i === bars.length - 1) return;
    const n = bars[i + 1], x0 = X0 + i * PITCH + W - 0.5, x1 = X0 + (i + 1) * PITCH + 0.5;
    const c = (x1 - x0) * 0.62;
    out += `<path fill="${ribbons[s]}" d="M${x0} ${b[s + 1]}C${x0 + c} ${b[s + 1]} ${x1 - c} ${n[s + 1]} ${x1} ${n[s + 1]}V${BASE}H${x0}z"/>`;
  });
  bars.forEach((b, i) => {
    out += `<rect fill="${fills[s]}" x="${X0 + i * PITCH}" y="${b[s + 1]}" width="${W}" height="${BASE - b[s + 1]}"/>`;
  });
}
bars.forEach((b, i) => {
  const x = X0 + i * PITCH + W / 2 + 4.5;
  out += `<text class="xtick" transform="translate(${x} 726.5) rotate(-90)" text-anchor="end" letter-spacing=".18">${b[0]}</text>`;
});
out += '<text class="axis" transform="translate(307 656.5) rotate(-90)" textLength="301">Subtotal, Tax, Total Due and Total Freight</text>';
out += '<text class="axis" x="630" y="904" text-anchor="middle" textLength="58">Product</text>';
out += '<rect x="352" y="907" width="555.500" height="9" fill="#929292"/><rect x="352.500" y="907.500" width="54" height="8.500" fill="#747474" stroke="#fff"/>';
svg.innerHTML = out;
```
